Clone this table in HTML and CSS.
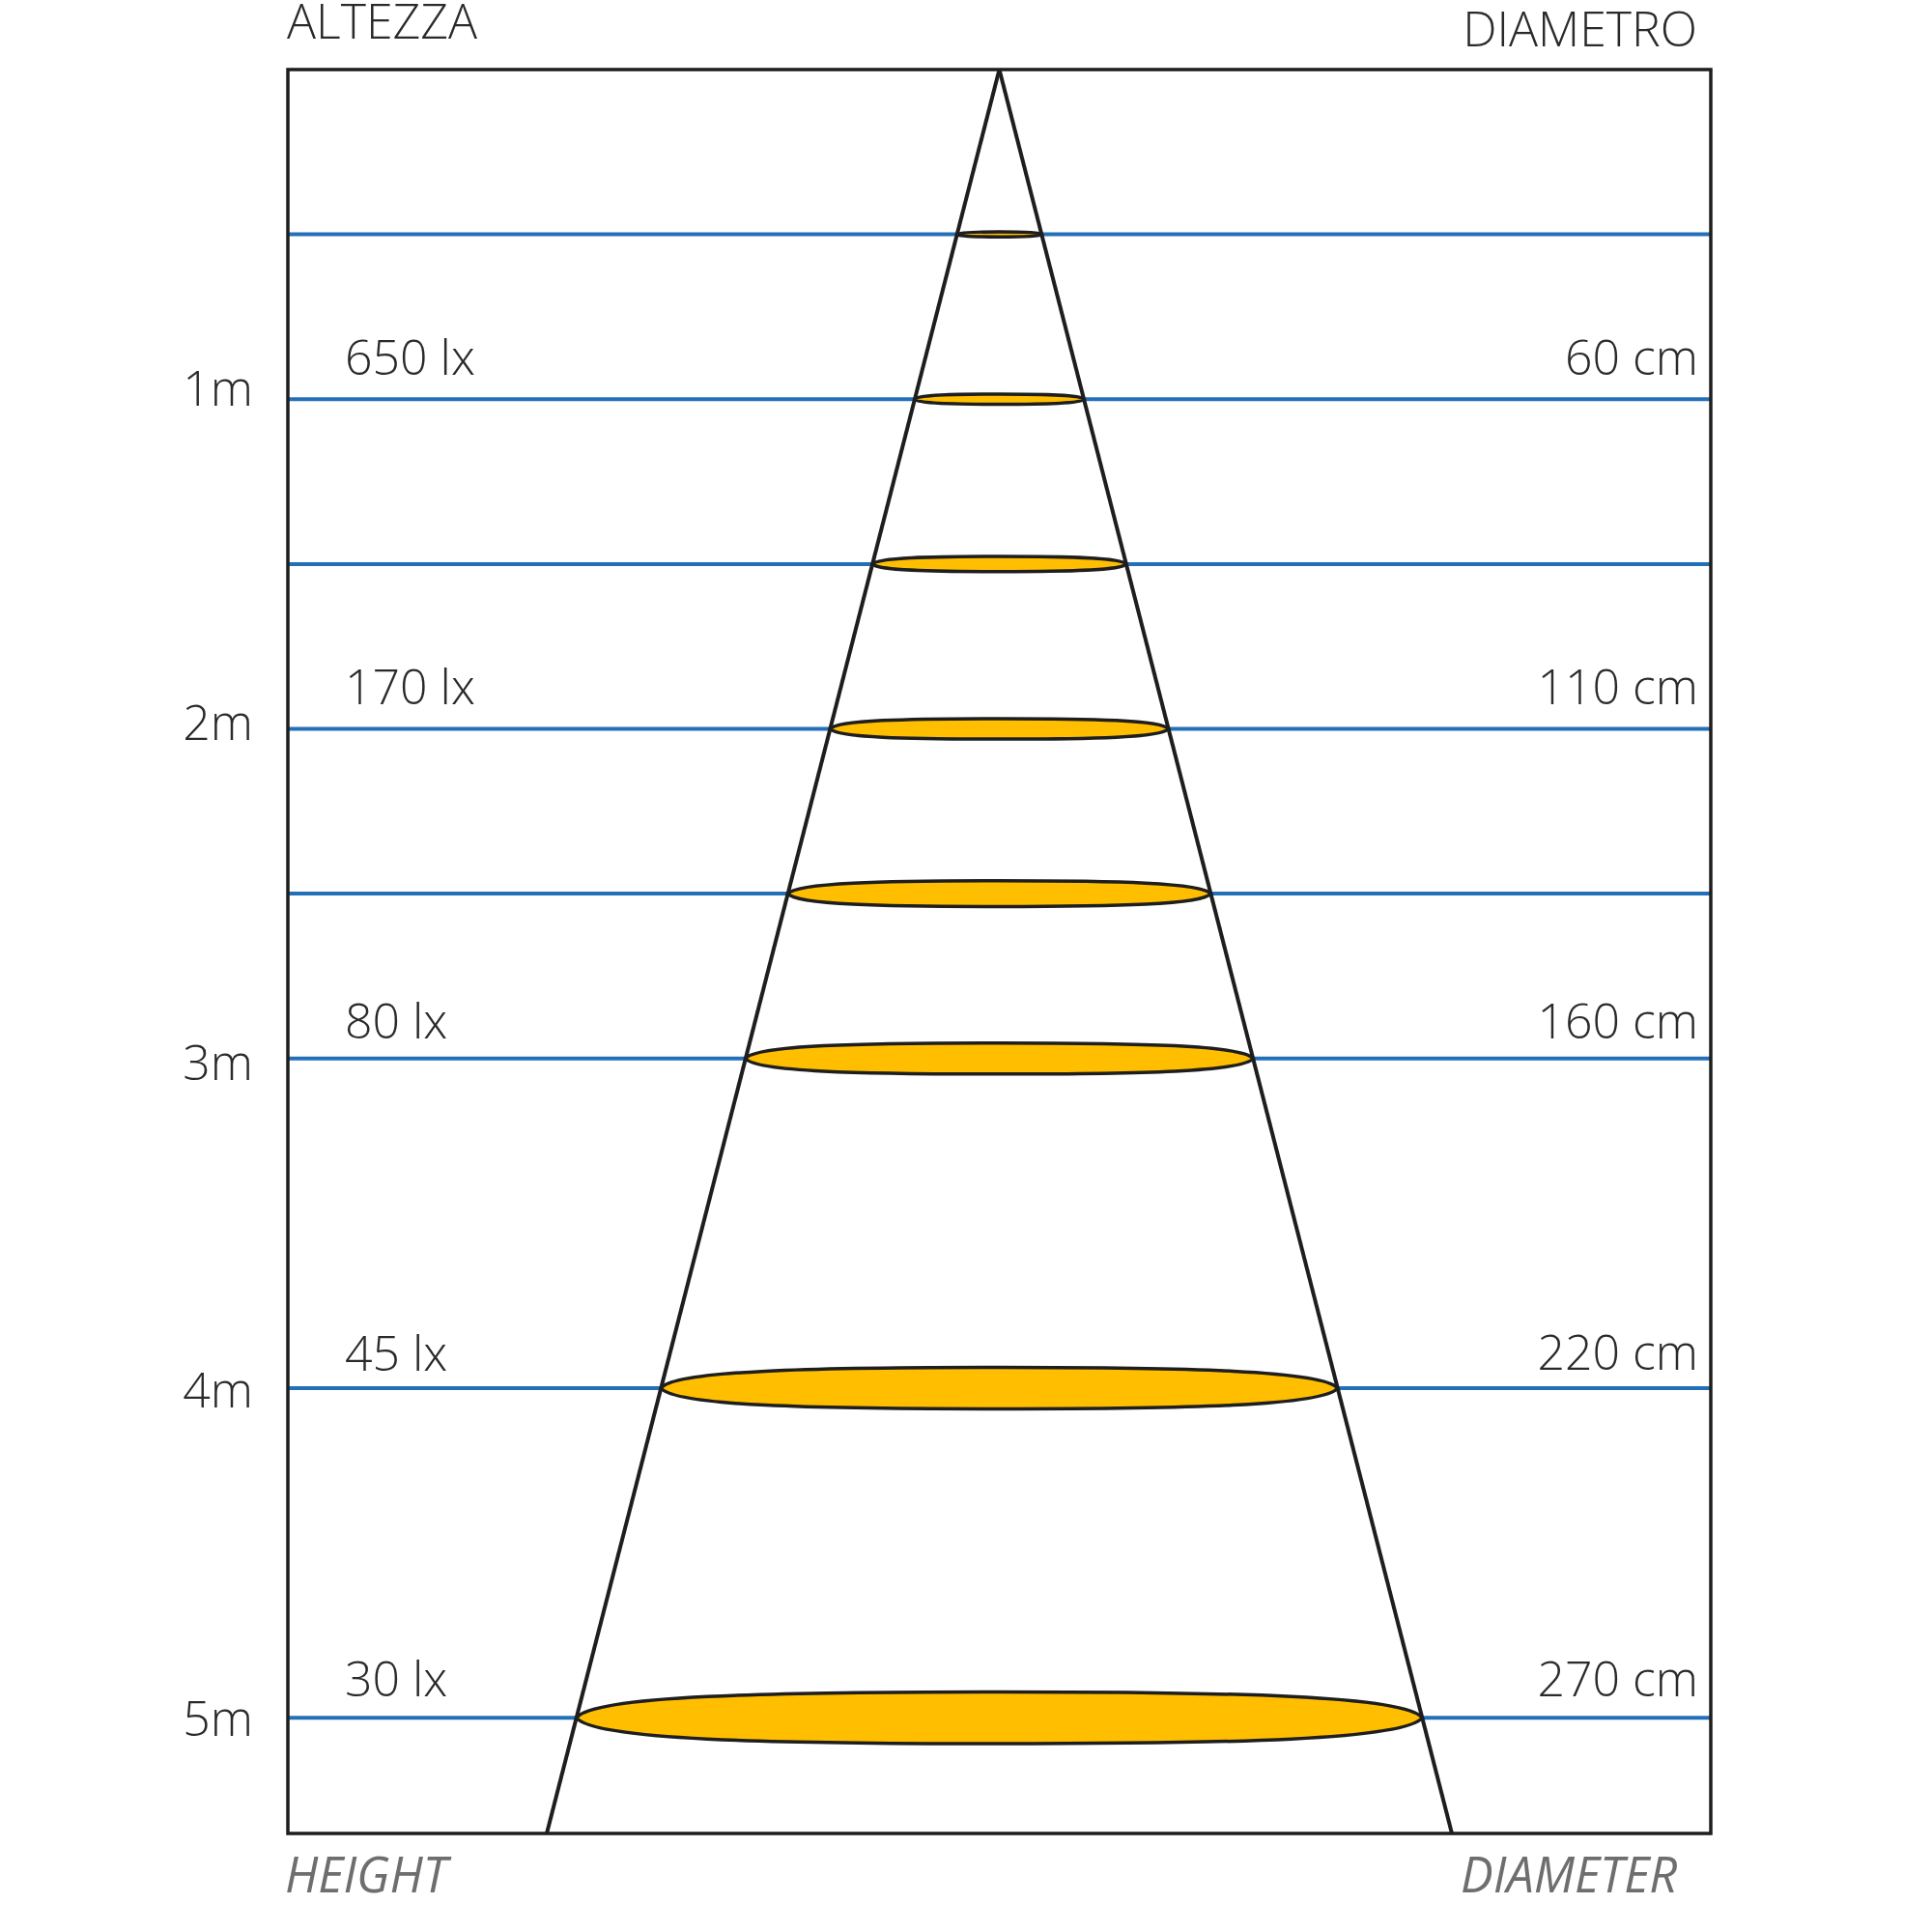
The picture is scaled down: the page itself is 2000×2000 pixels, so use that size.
FILE: index.html
```html
<!DOCTYPE html>
<html lang="it">
<head>
<meta charset="utf-8">
<title>Altezza / Diametro</title>
<link rel="stylesheet" href="styles.css">
</head>
<body>
<main class="page">
<svg class="chart" viewBox="0 0 2000 2000" width="2000" height="2000" xmlns="http://www.w3.org/2000/svg">
  <g class="grid">
    <line x1="298" y1="242.6" x2="1771" y2="242.6"/>
    <line x1="298" y1="413.25" x2="1771" y2="413.25"/>
    <line x1="298" y1="583.9" x2="1771" y2="583.9"/>
    <line x1="298" y1="754.5" x2="1771" y2="754.5"/>
    <line x1="298" y1="925.1" x2="1771" y2="925.1"/>
    <line x1="298" y1="1095.75" x2="1771" y2="1095.75"/>
    <line x1="298" y1="1437" x2="1771" y2="1437"/>
    <line x1="298" y1="1778.25" x2="1771" y2="1778.25"/>
  </g>
  <g class="spots">
    <path transform="translate(1034.5 242.6) scale(43.8 2.6)" d="M-1 0C-0.96 -0.85 -0.55 -1 0 -1C0.55 -1 0.96 -0.85 1 0C0.96 0.85 0.55 1 0 1C-0.55 1 -0.96 0.85 -1 0Z"/>
    <path transform="translate(1034.5 413.25) scale(87.6 5.2)" d="M-1 0C-0.96 -0.85 -0.55 -1 0 -1C0.55 -1 0.96 -0.85 1 0C0.96 0.85 0.55 1 0 1C-0.55 1 -0.96 0.85 -1 0Z"/>
    <path transform="translate(1034.5 583.9) scale(131.3 7.9)" d="M-1 0C-0.96 -0.85 -0.55 -1 0 -1C0.55 -1 0.96 -0.85 1 0C0.96 0.85 0.55 1 0 1C-0.55 1 -0.96 0.85 -1 0Z"/>
    <path transform="translate(1034.5 754.5) scale(175.1 10.6)" d="M-1 0C-0.96 -0.85 -0.55 -1 0 -1C0.55 -1 0.96 -0.85 1 0C0.96 0.85 0.55 1 0 1C-0.55 1 -0.96 0.85 -1 0Z"/>
    <path transform="translate(1034.5 925.1) scale(218.9 13.4)" d="M-1 0C-0.96 -0.85 -0.55 -1 0 -1C0.55 -1 0.96 -0.85 1 0C0.96 0.85 0.55 1 0 1C-0.55 1 -0.96 0.85 -1 0Z"/>
    <path transform="translate(1034.5 1095.75) scale(262.7 16.1)" d="M-1 0C-0.96 -0.85 -0.55 -1 0 -1C0.55 -1 0.96 -0.85 1 0C0.96 0.85 0.55 1 0 1C-0.55 1 -0.96 0.85 -1 0Z"/>
    <path transform="translate(1034.5 1437) scale(350.2 21.5)" d="M-1 0C-0.96 -0.85 -0.55 -1 0 -1C0.55 -1 0.96 -0.85 1 0C0.96 0.85 0.55 1 0 1C-0.55 1 -0.96 0.85 -1 0Z"/>
    <path transform="translate(1034.5 1778.25) scale(437.8 26.8)" d="M-1 0C-0.96 -0.85 -0.55 -1 0 -1C0.55 -1 0.96 -0.85 1 0C0.96 0.85 0.55 1 0 1C-0.55 1 -0.96 0.85 -1 0Z"/>
  </g>
  <g class="beam">
    <line x1="1034.5" y1="72" x2="566" y2="1898"/>
    <line x1="1034.5" y1="72" x2="1503" y2="1898"/>
  </g>
  <rect class="frame" x="298" y="72" width="1473" height="1826"/>

  <text class="label" x="297" y="40">ALTEZZA</text>
  <text class="label end" x="1757" y="48">DIAMETRO</text>

  <g class="label">
    <text x="357" y="388">650 lx</text>
    <text x="357" y="729">170 lx</text>
    <text x="357" y="1075">80 lx</text>
    <text x="357" y="1419">45 lx</text>
    <text x="357" y="1756">30 lx</text>
  </g>
  <g class="label end">
    <text x="1758" y="388">60 cm</text>
    <text x="1758" y="729">110 cm</text>
    <text x="1758" y="1075">160 cm</text>
    <text x="1758" y="1418">220 cm</text>
    <text x="1758" y="1756">270 cm</text>
  </g>
  <g class="label end">
    <text x="262" y="420">1m</text>
    <text x="262" y="766">2m</text>
    <text x="262" y="1118">3m</text>
    <text x="262" y="1457">4m</text>
    <text x="262" y="1797">5m</text>
  </g>

  <text class="caption" x="295" y="1959">HEIGHT</text>
  <text class="caption" x="1512" y="1959">DIAMETER</text>
</svg>
</main>
</body>
</html>
```

FILE: styles.css
```css
html, body {
  margin: 0;
  padding: 0;
  background: #ffffff;
}

.page {
  width: 2000px;
  height: 2000px;
}

.chart {
  display: block;
  width: 2000px;
  height: 2000px;
}

.grid line {
  stroke: #2470b8;
  stroke-width: 4;
}

.spots path {
  fill: #ffbe00;
  stroke: #1e1e1e;
  stroke-width: 3.5;
  vector-effect: non-scaling-stroke;
}

.beam line {
  stroke: #1e1e1e;
  stroke-width: 4;
  stroke-linecap: butt;
}

.frame {
  fill: none;
  stroke: #1e1e1e;
  stroke-width: 3.5;
}

.label {
  font-family: "Open Sans", "DejaVu Sans", sans-serif;
  font-weight: 300;
  font-size: 50px;
  fill: #2a2a2a;
}

.end,
.end text {
  text-anchor: end;
}

.caption {
  font-family: "Open Sans", "DejaVu Sans", sans-serif;
  font-style: italic;
  font-weight: 400;
  font-size: 50.5px;
  fill: #6e6e6e;
}
```
